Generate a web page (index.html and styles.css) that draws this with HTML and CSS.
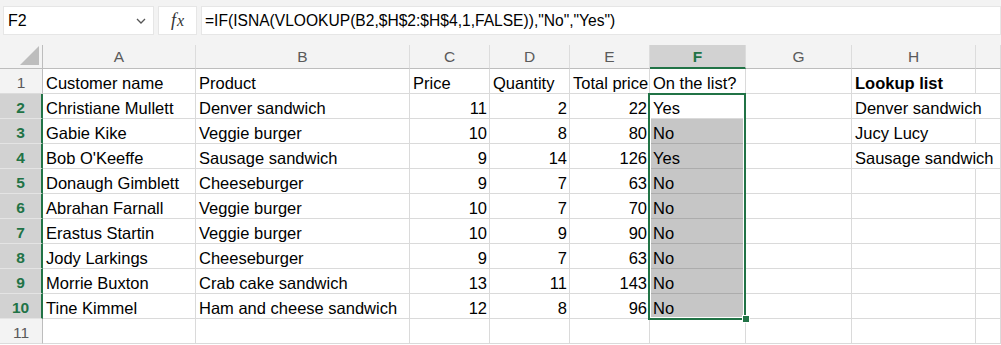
FILE: index.html
```html
<!DOCTYPE html>
<html lang="en">
<head>
    <meta charset="UTF-8">
    <title>Lookup check</title>
    <link rel="stylesheet" href="styles.css">
</head>
<body>
    <div class="toolbar">
        <div class="namebox">
            <span>F2</span>
            <svg width="10" height="6" viewBox="0 0 10 6"><polyline points="1,1 5,5 9,1" fill="none" stroke="#555" stroke-width="1.3"/></svg>
        </div>
        <div class="fxbox"><span class="fx">f<span>x</span></span></div>
        <div class="formula">=IF(ISNA(VLOOKUP(B2,$H$2:$H$4,1,FALSE)),"No","Yes")</div>
    </div>

    <div class="sheet">
        <div class="h corner">
            <svg width="20" height="20" viewBox="0 0 20 20"><polygon points="19,0 19,19 0,19" fill="#bdbdbd"/></svg>
        </div>
        <div class="h">A</div>
        <div class="h">B</div>
        <div class="h">C</div>
        <div class="h">D</div>
        <div class="h">E</div>
        <div class="h sel">F</div>
        <div class="h">G</div>
        <div class="h">H</div>
        <div class="h"></div>

        <div class="rh">1</div>
        <div class="c">Customer name</div>
        <div class="c">Product</div>
        <div class="c">Price</div>
        <div class="c">Quantity</div>
        <div class="c">Total price</div>
        <div class="c">On the list?</div>
        <div class="c"></div>
        <div class="c bold">Lookup list</div>
        <div class="c"></div>

        <div class="rh sel">2</div>
        <div class="c">Christiane Mullett</div>
        <div class="c">Denver sandwich</div>
        <div class="c num">11</div>
        <div class="c num">2</div>
        <div class="c num">22</div>
        <div class="c">Yes</div>
        <div class="c"></div>
        <div class="c spill">Denver sandwich</div>
        <div class="c"></div>

        <div class="rh sel">3</div>
        <div class="c">Gabie Kike</div>
        <div class="c">Veggie burger</div>
        <div class="c num">10</div>
        <div class="c num">8</div>
        <div class="c num">80</div>
        <div class="c fill">No</div>
        <div class="c"></div>
        <div class="c">Jucy Lucy</div>
        <div class="c"></div>

        <div class="rh sel">4</div>
        <div class="c">Bob O'Keeffe</div>
        <div class="c">Sausage sandwich</div>
        <div class="c num">9</div>
        <div class="c num">14</div>
        <div class="c num">126</div>
        <div class="c fill">Yes</div>
        <div class="c"></div>
        <div class="c spill">Sausage sandwich</div>
        <div class="c"></div>

        <div class="rh sel">5</div>
        <div class="c">Donaugh Gimblett</div>
        <div class="c">Cheeseburger</div>
        <div class="c num">9</div>
        <div class="c num">7</div>
        <div class="c num">63</div>
        <div class="c fill">No</div>
        <div class="c"></div>
        <div class="c"></div>
        <div class="c"></div>

        <div class="rh sel">6</div>
        <div class="c">Abrahan Farnall</div>
        <div class="c">Veggie burger</div>
        <div class="c num">10</div>
        <div class="c num">7</div>
        <div class="c num">70</div>
        <div class="c fill">No</div>
        <div class="c"></div>
        <div class="c"></div>
        <div class="c"></div>

        <div class="rh sel">7</div>
        <div class="c">Erastus Startin</div>
        <div class="c">Veggie burger</div>
        <div class="c num">10</div>
        <div class="c num">9</div>
        <div class="c num">90</div>
        <div class="c fill">No</div>
        <div class="c"></div>
        <div class="c"></div>
        <div class="c"></div>

        <div class="rh sel">8</div>
        <div class="c">Jody Larkings</div>
        <div class="c">Cheeseburger</div>
        <div class="c num">9</div>
        <div class="c num">7</div>
        <div class="c num">63</div>
        <div class="c fill">No</div>
        <div class="c"></div>
        <div class="c"></div>
        <div class="c"></div>

        <div class="rh sel">9</div>
        <div class="c">Morrie Buxton</div>
        <div class="c">Crab cake sandwich</div>
        <div class="c num">13</div>
        <div class="c num">11</div>
        <div class="c num">143</div>
        <div class="c fill">No</div>
        <div class="c"></div>
        <div class="c"></div>
        <div class="c"></div>

        <div class="rh sel">10</div>
        <div class="c">Tine Kimmel</div>
        <div class="c">Ham and cheese sandwich</div>
        <div class="c num">12</div>
        <div class="c num">8</div>
        <div class="c num">96</div>
        <div class="c fill">No</div>
        <div class="c"></div>
        <div class="c"></div>
        <div class="c"></div>

        <div class="rh">11</div>
        <div class="c"></div>
        <div class="c"></div>
        <div class="c"></div>
        <div class="c"></div>
        <div class="c"></div>
        <div class="c"></div>
        <div class="c"></div>
        <div class="c"></div>
        <div class="c"></div>

        <!-- selected range F2:F10 -->
        <div class="selection"></div>
        <div class="handle"></div>
    </div>
</body>
</html>
```

FILE: styles.css
```css
* {
    box-sizing: border-box;
}

body {
    margin: 0;
    width: 1001px;
    height: 345px;
    overflow: hidden;
    background-color: #fff;
    font-family: "Liberation Sans", Arial, sans-serif;
    color: #000;
}

.toolbar {
    display: flex;
    gap: 4px;
    height: 45px;
    padding: 6px 0 0 3px;
    background-color: #f3f3f3;
}

.namebox,
.fxbox,
.formula {
    height: 29px;
    background-color: #fff;
    border: 1px solid #e6e6e6;
}

.namebox {
    width: 151px;
    display: flex;
    align-items: center;
    justify-content: space-between;
    padding: 0 7px 0 4px;
    font-size: 16px;
}

.fxbox {
    width: 39px;
    display: flex;
    align-items: center;
    justify-content: center;
}

.fx {
    font-family: "Liberation Serif", serif;
    font-style: italic;
    font-size: 18px;
    color: #333;
}

.fx span {
    margin-left: 1px;
    font-size: 16px;
}

.formula {
    flex: 1;
    padding: 0 0 0 3px;
    font-size: 15.6px;
    line-height: 27px;
    white-space: nowrap;
}

.sheet {
    position: relative;
    display: grid;
    grid-template-columns: 43px 153px 214px 80px 80px 80px 96px 106px 124px 1fr;
    grid-template-rows: 24px repeat(11, 25px);
}

.h {
    background-color: #f3f3f3;
    color: #5a5a5a;
    font-size: 15.5px;
    line-height: 22px;
    padding-top: 1px;
    text-align: center;
    border-right: 1px solid #dcdcdc;
    border-bottom: 1px solid #bdbdbd;
}

.h.corner {
    display: flex;
    align-items: flex-end;
    justify-content: flex-end;
    padding: 0 2px 2px 0;
    border-right-color: #bdbdbd;
}

.h.sel {
    background-color: #d2d2d2;
    color: #217346;
    font-weight: bold;
    border-bottom: 2px solid #217346;
}

.rh {
    background-color: #f3f3f3;
    color: #5a5a5a;
    font-size: 15.5px;
    line-height: 20px;
    padding-top: 4px;
    text-align: center;
    border-right: 1px solid #bdbdbd;
    border-bottom: 1px solid #dcdcdc;
}

.rh.sel {
    background-color: #d2d2d2;
    color: #217346;
    font-weight: bold;
    border-right: 2px solid #217346;
    border-bottom-color: #e4e4e4;
}

.c {
    font-size: 16.5px;
    line-height: 20px;
    padding: 4px 2px 0 3px;
    white-space: nowrap;
    border-right: 1px solid #dadada;
    border-bottom: 1px solid #dadada;
}

.c.num {
    text-align: right;
}

.c.bold {
    font-weight: bold;
}

.c.spill {
    border-right-color: transparent;
}

.c.fill {
    background-color: #c6c6c6;
    border-bottom-color: #acacac;
}

.selection {
    position: absolute;
    left: 648px;
    top: 48px;
    width: 98px;
    height: 227px;
    border: 2px solid #217346;
    box-shadow: inset 0 0 0 1px #fff;
    pointer-events: none;
}

.handle {
    position: absolute;
    left: 742px;
    top: 270px;
    width: 8px;
    height: 8px;
    background-color: #217346;
    border: 1px solid #fff;
}
```
